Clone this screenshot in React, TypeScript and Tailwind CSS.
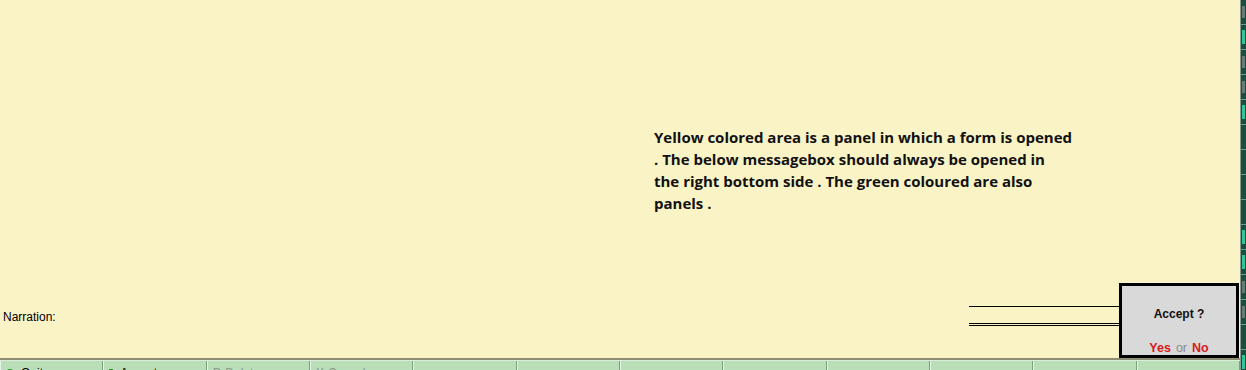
const buttons = [
  { label: "Quit", icon: "quit", enabled: true },
  { label: "Accept", icon: "accept", enabled: true },
  { label: "Delete", icon: "D", enabled: false },
  { label: "Cancel", icon: "X", enabled: false },
  { label: "", icon: "", enabled: true },
  { label: "", icon: "", enabled: true },
  { label: "", icon: "", enabled: true },
  { label: "", icon: "", enabled: true },
  { label: "", icon: "", enabled: true },
  { label: "", icon: "", enabled: true },
  { label: "", icon: "", enabled: true },
  { label: "", icon: "", enabled: true },
];

const sideMarks = [
  "grey", "teal", "grey", "grey", "teal", "none", "none", "none", "none", "teal", "teal", "grey", "grey", "none", "teal",
];

function BarButton({ label, icon, enabled }: { label: string; icon: string; enabled: boolean }) {
  return (
    <div className="h-[24px] bg-[#b8dfb8] border-l border-l-[#e6f4e6] border-r border-r-[#7f9f7f] flex items-start pt-[5px] pl-[5px] gap-[4px] text-[12px] leading-[14px] overflow-hidden">
      {icon === "quit" && <span className="mt-[3px] w-[8px] h-[8px] rounded-full border-2 border-[#2f8f2f]" />}
      {icon === "accept" && <span className="mt-[3px] w-[4px] h-[8px] bg-[#2f7f2f]" />}
      {(icon === "D" || icon === "X") && <span className="text-[#8a9a8a]">{icon}</span>}
      {label && <span className={enabled ? "text-black ml-[3px]" : "text-[#8a9a8a]"}>{label}</span>}
    </div>
  );
}

export default function App() {
  return (
    <div className="h-[370px] w-[1246px] overflow-hidden flex" style={{ fontFamily: '"Liberation Sans", Arial, sans-serif' }}>
      <div className="w-[1240px] flex flex-col">
        <div className="h-[360px] shrink-0 bg-[#faf3c6] border-b-2 border-b-[#8d8d74] flex flex-col">
          <div className="pt-[126px] pl-[654px] flex-1">
            <p
              className="w-[419px] text-[15px] leading-[22px] font-bold text-[#111]"
              style={{ fontFamily: '"Open Sans", "Noto Sans", sans-serif' }}
            >
              Yellow colored area is a panel in which a form is opened . The below messagebox should always be opened in the right bottom side . The green coloured are also panels .
            </p>
          </div>
          <div className="flex items-end">
            <div className="flex-1 pl-[3px] pb-[32px] text-[12px] text-black">Narration:</div>
            <div className="w-[150px] flex flex-col pb-[32px]">
              <div className="h-px bg-black" />
              <div className="h-[16px]" />
              <div className="h-px bg-black" />
              <div className="h-px" />
              <div className="h-px bg-black" />
            </div>
            <div className="w-[120px] h-[75px] mr-[1px] bg-[#d9d9d9] border-[3px] border-black flex flex-col items-center">
              <div className="pt-[19px] text-[12px] font-bold text-[#111]">Accept ?</div>
              <div className="mt-auto pb-[1px] text-[12.5px] leading-[12px] font-bold flex gap-[5px]">
                <span className="text-[#d42020]">Yes</span>
                <span className="font-normal text-[#8a8a8a]">or</span>
                <span className="text-[#d42020]">No</span>
              </div>
            </div>
          </div>
        </div>
        <div className="grid grid-cols-12 shrink-0 border-t border-t-[#d8ecd8]">
          {buttons.map((b, i) => (
            <BarButton key={i} {...b} />
          ))}
        </div>
      </div>
      <div className="w-[6px] bg-[#1b4d3e] border-l border-l-[#8a9a90] flex flex-col">
        {sideMarks.map((m, i) => (
          <div key={i} className="h-[25px] shrink-0 border-b border-b-[#5fa38a] flex items-center pl-px">
            {m === "teal" && <span className="w-[3px] h-[14px] bg-[#2fc49a]" />}
            {m === "grey" && <span className="w-[3px] h-[12px] bg-[#6a7a74]" />}
          </div>
        ))}
      </div>
    </div>
  );
}
